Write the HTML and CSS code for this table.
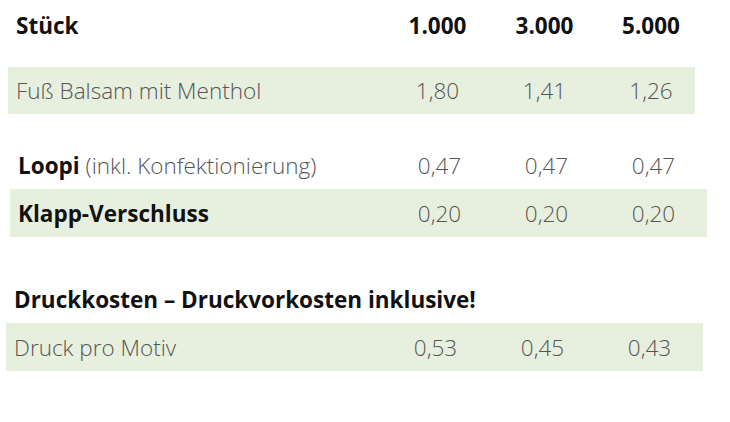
FILE: index.html
```html
<!DOCTYPE html>
<html lang="de">
<head>
<meta charset="utf-8">
<title>Preise</title>
<link rel="stylesheet" href="styles.css">
</head>
<body>
<div class="page">
  <div class="table t1">
    <div class="row head">
      <div class="cell label b">Stück</div>
      <div class="cell num b">1.000</div>
      <div class="cell num b">3.000</div>
      <div class="cell num b last">5.000</div>
    </div>
    <div class="row band">
      <div class="cell label">Fuß Balsam mit Menthol</div>
      <div class="cell num">1,80</div>
      <div class="cell num">1,41</div>
      <div class="cell num last">1,26</div>
    </div>
  </div>

  <div class="table t2">
    <div class="row">
      <div class="cell label"><span class="b">Loopi</span> (inkl. Konfektionierung)</div>
      <div class="cell num">0,47</div>
      <div class="cell num">0,47</div>
      <div class="cell num">0,47</div>
    </div>
    <div class="row band">
      <div class="cell label b">Klapp-Verschluss</div>
      <div class="cell num">0,20</div>
      <div class="cell num">0,20</div>
      <div class="cell num">0,20</div>
    </div>
  </div>

  <div class="table t3">
    <div class="row head">
      <div class="cell label b span">Druckkosten – Druckvorkosten inklusive!</div>
    </div>
    <div class="row band">
      <div class="cell label">Druck pro Motiv</div>
      <div class="cell num">0,53</div>
      <div class="cell num">0,45</div>
      <div class="cell num">0,43</div>
    </div>
  </div>
</div>
</body>
</html>
```

FILE: styles.css
```css
html, body {
  margin: 0;
  padding: 0;
  background: #ffffff;
}

body {
  font-family: "Open Sans", "Liberation Sans", sans-serif;
  font-size: 22.5px;
  font-weight: 300;
  color: #555555;
}

.page {
  display: flex;
  flex-direction: column;
  padding-top: 1px;
}

.table {
  display: flex;
  flex-direction: column;
}

.row {
  display: grid;
  grid-template-columns: 376px 107px 107px 107px;
  height: 48px;
  align-items: center;
}

.band {
  background: #e7f0de;
}

.cell {
  white-space: nowrap;
}

.num {
  text-align: center;
}

.b {
  font-weight: 700;
  color: #111111;
}

.span {
  grid-column: 1 / -1;
}

/* table 1 */
.t1 {
  margin-left: 8px;
  width: 687px;
}
.t1 .row {
  grid-template-columns: 376px 107px 107px 97px;
}
.t1 .head {
  margin-bottom: 18px;
}
.t1 .band {
  height: 47px;
}
.t1 .label {
  padding-left: 8px;
}
.t1 .last {
  padding-left: 9px;
}

/* table 2 */
.t2 {
  margin-left: 10px;
  width: 697px;
  margin-top: 28px;
}
.t2 .row:first-child {
  height: 47px;
}
.t2 .label {
  padding-left: 8px;
}

/* table 3 */
.t3 {
  margin-left: 6px;
  width: 697px;
  margin-top: 38px;
}
.t3 .label {
  padding-left: 8px;
}
```
